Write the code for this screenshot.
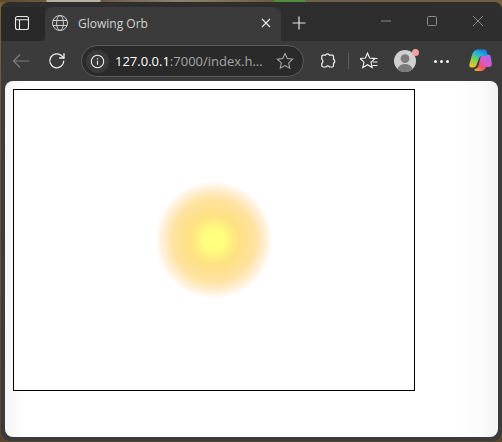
<div class="desk">
  <div class="window">
    <div class="tabstrip">
      <div class="side">
        <svg width="16" height="16" viewBox="0 0 16 16" fill="none" stroke="#e8e8e8" stroke-width="1.100"><rect x="1.500" y="1.500" width="13" height="13" rx="2"/><path d="M1.500 4.800h13M5.500 4.800v9.700"/></svg>
      </div>
      <div class="tab">
        <svg class="globe" width="18" height="18" viewBox="0 0 18 18" fill="none" stroke="#cfcfcf" stroke-width="1"><circle cx="9" cy="9" r="7.500"/><ellipse cx="9" cy="9" rx="3.400" ry="7.500"/><path d="M2 6.500h14M2 11.500h14"/></svg>
        <span class="title">Glowing Orb</span>
        <svg class="close" width="12" height="12" viewBox="0 0 12 12" stroke="#e6e6e6" stroke-width="1.200"><path d="M2 2l8 8M10 2l-8 8"/></svg>
      </div>
      <div class="plus">
        <svg width="16" height="16" viewBox="0 0 16 16" stroke="#e6e6e6" stroke-width="1.200"><path d="M8 1.500v13M1.500 8h13"/></svg>
      </div>
      <div class="spacer"></div>
      <div class="winbtns">
        <svg width="12" height="12" viewBox="0 0 12 12" stroke="#8a8a8a" stroke-width="1"><path d="M1 6h10"/></svg>
        <svg width="12" height="12" viewBox="0 0 12 12" fill="none" stroke="#8a8a8a" stroke-width="1"><rect x="1.500" y="1.500" width="9" height="9" rx="1"/></svg>
        <svg width="12" height="12" viewBox="0 0 12 12" stroke="#8a8a8a" stroke-width="1"><path d="M1 1l10 10M11 1L1 11"/></svg>
      </div>
    </div>

    <div class="toolbar">
      <svg class="back" width="18" height="18" viewBox="0 0 18 18" fill="none" stroke="#7d7d7d" stroke-width="1.200"><path d="M17 9H1.500M8 2.500L1.500 9 8 15.500"/></svg>
      <svg class="reload" width="18" height="18" viewBox="0 0 18 18" fill="none" stroke="#f0f0f0" stroke-width="1.300"><path d="M15.800 8.800a7 7 0 1 1-2.200-5.100L16 6"/><path d="M16 1.200V6h-4.800"/></svg>
      <div class="address">
        <span class="info">
          <svg width="15" height="15" viewBox="0 0 15 15" fill="none" stroke="#f0f0f0" stroke-width="1.100"><circle cx="7.500" cy="7.500" r="6.200"/><path d="M7.500 6.800v4M7.500 4.200v1.200"/></svg>
        </span>
        <span class="url"><b>127.0.0.1</b>:7000/index.h...</span>
        <svg class="fav" width="18" height="18" viewBox="0 0 18 18" fill="none" stroke="#a8a8a8" stroke-width="1.100"><path d="M9 1.600l2.300 4.900 5.300.7-3.900 3.700 1 5.300L9 13.600l-4.700 2.600 1-5.300-3.900-3.700 5.300-.7z"/></svg>
      </div>
      <svg class="ext" width="16" height="16" viewBox="0 0 16 16" fill="none" stroke="#f4f4f4" stroke-width="1.200"><path d="M5.600 2.200c.5-1.700 3.300-1.700 3.800 0h2.900c.7 0 1.200.5 1.200 1.200v2.900c1.700.5 1.700 3.400 0 3.900v2.600c0 .7-.5 1.200-1.200 1.200H9.500c-.6-1.500-3-1.500-3.600 0H3c-.7 0-1.200-.5-1.200-1.200v-2.400c1.500-.6 1.500-3.500 0-4.100V3.400c0-.7.500-1.200 1.200-1.200z"/></svg>
      <span class="sep"></span>
      <svg class="favs" width="18" height="18" viewBox="0 0 18 18" fill="none" stroke="#f4f4f4" stroke-width="1.100"><path d="M7.500 1l2.100 5 5.400.5-4 3.700 1.200 5.300-4.700-2.800-4.700 2.800 1.200-5.300-4-3.700 5.400-.5z"/><path d="M12 6.500h5.500M12.500 10h5M12.500 13.500h5"/></svg>
      <span class="avatar">
        <svg width="22" height="22" viewBox="0 0 22 22"><circle cx="11" cy="11" r="11" fill="#cfcfcf"/><circle cx="11" cy="8.600" r="4.400" fill="#7b7b7b"/><path d="M3.400 19c1.200-3.400 4-5 7.600-5s6.400 1.600 7.600 5a11 11 0 0 1-15.200 0z" fill="#7b7b7b"/></svg>
        <i class="badge"></i>
      </span>
      <span class="dots"><i></i><i></i><i></i></span>
      <svg class="copilot" width="24" height="24" viewBox="0 0 24 24">
        <defs>
          <linearGradient id="cpa" x1="0.700" y1="0" x2="0.200" y2="1"><stop offset="0" stop-color="#1f7fe6"/><stop offset=".3" stop-color="#22b8d8"/><stop offset=".6" stop-color="#7ccf4e"/><stop offset="1" stop-color="#f5c52c"/></linearGradient>
          <linearGradient id="cpc" x1="1" y1="0.100" x2="0.200" y2="1"><stop offset="0" stop-color="#a86cf0"/><stop offset=".45" stop-color="#d85ac8"/><stop offset=".75" stop-color="#f0506e"/><stop offset="1" stop-color="#f6a02c"/></linearGradient>
        </defs>
        <path d="M14 5.500h5c1.500 0 2.500 1 2.800 2.500l1 6.500c.3 2-1 3.500-3 3.500h-2.800c-.9 2.500-3 4-5.500 4H7c-1.500 0-2-1.500-1-2 2.500-.5 3-2 3.500-3.500l2-8c.3-1.500 1.200-3 2.500-3z" fill="url(#cpc)"/>
        <path d="M9 .500h6c1.500 0 2.500.8 2.800 2.200L18.500 7H13c-1.500 0-2.500.8-3 2.500L7.500 16c-.5 1.500-1.500 2.500-3.500 2.500H2.500C.8 18.500 0 17 .3 15.500L3 6C4 2.500 6 .5 9 .5z" fill="url(#cpa)"/>
      </svg>
    </div>

    <div class="page">
      <div class="canvas">
        <div class="orb"></div>
      </div>
    </div>
  </div>
</div>

<style>
  :global(body) {
    margin: 0;
    background: #6b5a3c;
  }
  .desk {
    width: 502px;
    height: 442px;
    padding: 2px 0 1px 1px;
    box-sizing: border-box;
    background:
      linear-gradient(90deg, #5c4a2c 0, #6d5c3a 46px, #b8b2a4 47px, #b8b2a4 100px, #6a5c42 101px, #8c8468 180px, #6c5c40 274px, #4f8f3c 275px, #4f8f3c 305px, #6e6248 306px, #6f6044 500px) top / 100% 2px no-repeat,
      linear-gradient(180deg, #7a5f34, #5a4630);
    overflow: hidden;
  }
  .window {
    height: 439px;
    width: 501px;
    background: #3b3b3b;
    border-radius: 8px 8px 9px 9px;
    overflow: hidden;
    display: flex;
    flex-direction: column;
    font-family: "Open Sans", "Noto Sans", sans-serif;
  }
  .tabstrip {
    height: 39px;
    flex: none;
    background: #2e2e2e;
    display: flex;
    align-items: flex-end;
  }
  .side {
    width: 44px;
    height: 34px;
    background: #292929;
    border-bottom-right-radius: 8px;
    display: flex;
    align-items: center;
    justify-content: center;
    padding: 0 3px 2px 0;
    box-sizing: border-box;
  }
  .tab {
    width: 236px;
    height: 34px;
    background: #3b3b3b;
    border-radius: 8px 8px 0 0;
    display: flex;
    align-items: center;
    padding: 0 9px 2px 6px;
    box-sizing: border-box;
  }
  .title {
    margin-left: 9px;
    font-size: 12px;
    color: #d4d4d4;
    flex: 1;
  }
  .plus {
    width: 36px;
    height: 34px;
    padding-bottom: 2px;
    box-sizing: border-box;
    display: flex;
    align-items: center;
    justify-content: center;
  }
  .spacer { flex: 1; }
  .winbtns {
    align-self: flex-start;
    margin-top: 13px;
    display: flex;
    gap: 34px;
    padding-right: 18px;
  }
  .toolbar {
    height: 40px;
    flex: none;
    display: flex;
    align-items: center;
    padding-left: 11px;
    box-sizing: border-box;
  }
  .back { margin-right: 18px; }
  .reload { margin-right: 15px; }
  .address {
    width: 223px;
    height: 32px;
    box-sizing: border-box;
    border: 1px solid #5c5c5c;
    border-radius: 16px;
    background: #2a2a2a;
    display: flex;
    align-items: center;
    padding-left: 4px;
  }
  .info {
    width: 23px;
    height: 23px;
    border-radius: 50%;
    background: #3a3a3a;
    display: flex;
    align-items: center;
    justify-content: center;
    flex: none;
  }
  .url {
    margin-left: 6px;
    font-size: 13px;
    color: #a6a6a6;
    white-space: nowrap;
    width: 159px;
    overflow: hidden;
  }
  .url b {
    color: #fff;
    font-weight: 400;
  }
  .fav { margin-left: 2px; }
  .ext { margin-left: 16px; }
  .sep {
    width: 1px;
    height: 16px;
    background: #5c5c5c;
    margin-left: 12px;
  }
  .favs { margin-left: 11px; }
  .avatar {
    position: relative;
    width: 22px;
    height: 22px;
    margin-left: 16px;
  }
  .avatar svg { display: block; }
  .badge {
    position: absolute;
    right: -3px;
    top: -1px;
    width: 7px;
    height: 7px;
    border-radius: 50%;
    background: #f4a0a0;
  }
  .dots {
    display: flex;
    gap: 3px;
    margin-left: 18px;
  }
  .dots i {
    width: 3px;
    height: 3px;
    border-radius: 50%;
    background: #f0f0f0;
  }
  .copilot { margin-left: 20px; }
  .page {
    flex: 1;
    margin: 0 4px 4px 4px;
    border-radius: 8px;
    background: linear-gradient(90deg, #f6f6f6, #fff 22px, #fff 453px, #fbfbfb 475px, #f3f3f3);
    padding: 8px;
    box-sizing: border-box;
  }
  .canvas {
    width: 400px;
    height: 300px;
    border: 1px solid #000;
    background: #fff;
    display: flex;
    align-items: center;
    justify-content: center;
  }
  .orb {
    width: 118px;
    height: 118px;
    border-radius: 50%;
    background: radial-gradient(circle closest-side, #ffff80 0%, #ffff80 17%, #fff080 28%, #ffe182 42%, #ffe2a0 70%, #fff0d8 88%, #fff 100%);
  }
</style>
